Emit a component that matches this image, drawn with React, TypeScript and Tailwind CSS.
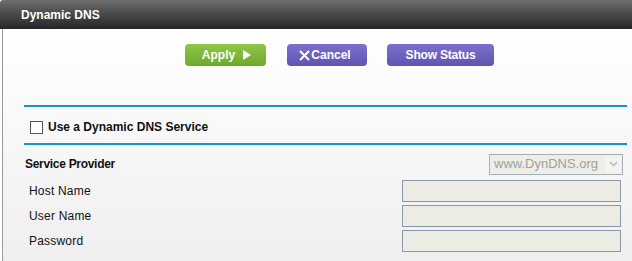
import React from "react";

export default function App() {
  const font = { fontFamily: '"Liberation Sans", Arial, sans-serif' };
  return (
    <div style={font} className="w-[632px] h-[261px] overflow-hidden bg-white flex flex-col">
      <div className="h-[29px] shrink-0 bg-gradient-to-b from-[#6e6e6e] to-[#262626] flex items-center pl-[21px] rounded-tl-[3px]">
        <span className="text-white font-bold text-[12px]">Dynamic DNS</span>
      </div>
      <div className="flex-1 flex">
        <div className="w-[2px] bg-white shrink-0" />
        <div className="w-[1px] bg-[#9a9a9a] shrink-0" />
        <div className="flex-1 bg-gradient-to-b from-white to-[#efefef] flex flex-col">
          <div className="flex pt-[15px] pl-[182px]">
            <button className="w-[81px] h-[22px] rounded-[4px] bg-gradient-to-b from-[#8fc747] to-[#6ea92c] text-white font-bold text-[12px] flex items-center justify-center gap-[8px] pl-[2px]">
              <span>Apply</span>
              <svg width="8" height="10" viewBox="0 0 8 10"><path d="M0 0 L8 5 L0 10 Z" fill="white" /></svg>
            </button>
            <button className="ml-[21px] w-[80px] h-[22px] rounded-[4px] bg-gradient-to-b from-[#7c70cc] to-[#5f54b2] text-white font-bold text-[12px] flex items-center justify-center pr-[4px]">
              <svg width="11" height="11" viewBox="0 0 11 11" className="mr-[1px]"><path d="M1 1 L10 10 M10 1 L1 10" stroke="white" strokeWidth="2" /></svg>
              <span>Cancel</span>
            </button>
            <button className="ml-[20px] w-[107px] h-[22px] rounded-[4px] bg-gradient-to-b from-[#7c70cc] to-[#5f54b2] text-white font-bold text-[12px] tracking-[-0.2px] flex items-center justify-center">
              Show Status
            </button>
          </div>
          <div className="ml-[21px] mr-[5px] mt-[39px] h-[2px] bg-[#1a95bf]" />
          <div className="flex items-center h-[36px] pl-[27px] pt-[4px]">
            <div className="w-[13px] h-[13px] border border-[#555] bg-white mr-[5px]" />
            <span className="font-bold text-[12px] text-[#111]">Use a Dynamic DNS Service</span>
          </div>
          <div className="ml-[21px] mr-[5px] h-[2px] bg-[#1a95bf]" />
          <div className="flex items-center justify-between h-[33px] pl-[22px] pr-[9px] pt-[5px]">
            <span className="font-bold text-[12px] tracking-[-0.3px] text-[#111]">Service Provider</span>
            <div className="w-[134px] h-[21px] border border-[#a6b0bd] bg-[#eeeee6] flex items-center">
              <span className="flex-1 text-[13px] text-[#a0a0a0] pl-[4px]">www.DynDNS.org</span>
              <div className="w-[16px] h-[17px] mr-[1px] bg-[#f4f4ee] flex items-center justify-center">
                <svg width="9" height="6" viewBox="0 0 9 6"><path d="M1 1 L4.5 4.5 L8 1" stroke="#b8b8b8" strokeWidth="1.5" fill="none" /></svg>
              </div>
            </div>
          </div>
          {["Host Name", "User Name", "Password"].map((l) => (
            <div key={l} className="flex items-center justify-between h-[25px] pl-[26px] pr-[11px]">
              <span className="text-[12px] text-[#111] tracking-[0.2px]">{l}</span>
              <div className="w-[219px] h-[22px] border border-[#8d99ab] bg-[#ecece4]" />
            </div>
          ))}
        </div>
      </div>
    </div>
  );
}
